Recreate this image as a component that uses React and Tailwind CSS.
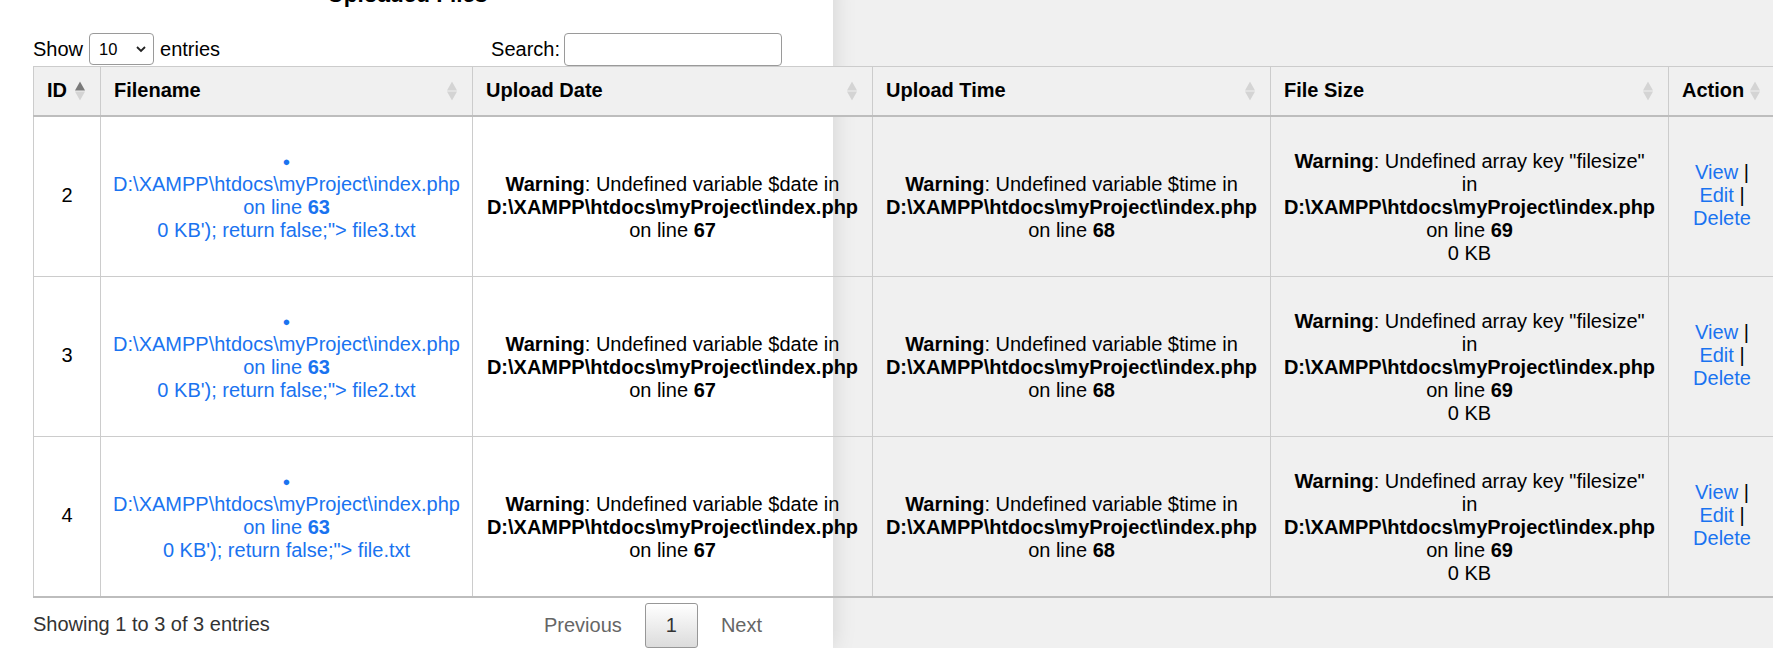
import React from "react";

function SortIcon({ active }) {
  return (
    <span className="absolute right-[15px] top-1/2 -translate-y-1/2 flex">
      <svg width="10" height="21" viewBox="0 0 10 21">
        <polygon points="0,10 5,1 10,10" fill={active ? "#7a7a7a" : "#d4d4d4"} />
        <polygon points="0,11 5,20 10,11" fill="#d4d4d4" />
      </svg>
    </span>
  );
}

const PATH = "D:\\XAMPP\\htdocs\\myProject\\index.php";

function Th({ children, active }) {
  return (
    <th className="relative h-[49px] bg-[#f0f0f0] border border-[#cccccc] border-b-2 border-b-[#bdbdbd] pl-[13px] pr-[30px] text-left font-bold align-middle">
      {children}
      <SortIcon active={active} />
    </th>
  );
}

const TD = "border border-[#cccccc] px-[12px] pt-[10px] pb-[11px] text-center align-middle whitespace-nowrap";

function Row({ id, file }) {
  return (
    <tr>
      <td className={TD}>{id}</td>
      <td className={TD + " text-[#1a73f0]"}>
        <div className="text-[13px] leading-[23px]">●</div>
        <div>{PATH}</div>
        <div>
          on line <b>63</b>
        </div>
        <div>0 KB'); return false;"&gt; {file}</div>
      </td>
      <td className={TD}>
        <div>&nbsp;</div>
        <div>
          <b>Warning</b>: Undefined variable $date in
        </div>
        <div>
          <b>{PATH}</b>
        </div>
        <div>
          on line <b>67</b>
        </div>
      </td>
      <td className={TD}>
        <div>&nbsp;</div>
        <div>
          <b>Warning</b>: Undefined variable $time in
        </div>
        <div>
          <b>{PATH}</b>
        </div>
        <div>
          on line <b>68</b>
        </div>
      </td>
      <td className={TD}>
        <div>&nbsp;</div>
        <div>
          <b>Warning</b>: Undefined array key "filesize"
        </div>
        <div>in</div>
        <div>
          <b>{PATH}</b>
        </div>
        <div>
          on line <b>69</b>
        </div>
        <div>0 KB</div>
      </td>
      <td className={TD}>
        <div>
          <span className="text-[#1a73f0]">View</span> |
        </div>
        <div>
          <span className="text-[#1a73f0]">Edit</span> |
        </div>
        <div>
          <span className="text-[#1a73f0]">Delete</span>
        </div>
      </td>
    </tr>
  );
}

export default function App() {
  return (
    <div className="w-full min-h-[648px] h-[648px] overflow-hidden bg-[#f0f0f0] font-['Liberation_Sans',Arial,sans-serif] text-[20px] leading-[23px] text-black">
      <div className="w-[833px] min-h-[648px] bg-white pl-[33px] pr-[51px] shadow-[0_0_22px_rgba(0,0,0,0.13)]">
        <h2 className="-mt-[18px] mb-[24px] text-center text-[22.5px] leading-[26px] font-bold">Uploaded Files</h2>
        <div className="flex items-center justify-between h-[34px]">
          <div className="flex items-center">
            <span>Show</span>
            <div className="mx-[6px] flex items-center justify-between w-[65px] h-[32px] border border-[#9a9a9a] rounded-[4px] pl-[9px] pr-[7px] text-[16.5px]">
              <span>10</span>
              <svg width="10" height="7" viewBox="0 0 10 7">
                <polyline points="1,1 5,5 9,1" fill="none" stroke="#222" strokeWidth="1.8" />
              </svg>
            </div>
            <span>entries</span>
          </div>
          <div className="flex items-center">
            <span>Search:</span>
            <div className="ml-[4px] w-[218px] h-[33px] border border-[#9a9a9a] rounded-[4px]" />
          </div>
        </div>
        <table className="table-fixed border-collapse w-[1742px]">
          <colgroup>
            <col className="w-[67px]" />
            <col className="w-[372px]" />
            <col className="w-[400px]" />
            <col className="w-[398px]" />
            <col className="w-[398px]" />
            <col className="w-[107px]" />
          </colgroup>
          <thead>
            <tr>
              <Th active>ID</Th>
              <Th>Filename</Th>
              <Th>Upload Date</Th>
              <Th>Upload Time</Th>
              <Th>File Size</Th>
              <Th>Action</Th>
            </tr>
          </thead>
          <tbody className="border-b-2 border-b-[#bdbdbd]">
            <Row id="2" file="file3.txt" />
            <Row id="3" file="file2.txt" />
            <Row id="4" file="file.txt" />
          </tbody>
        </table>
        <div className="flex justify-between w-[749px]">
          <div className="pt-[15px] text-[#333]">Showing 1 to 3 of 3 entries</div>
          <div className="flex items-center pt-[5px]">
            <span className="px-[20px] py-[10px] text-[#666]">Previous</span>
            <span className="ml-[3px] px-[20px] py-[10px] border border-[#979797] rounded-[3px] bg-gradient-to-b from-white to-[#dcdcdc] text-[#333]">1</span>
            <span className="ml-[3px] px-[20px] py-[10px] text-[#666]">Next</span>
          </div>
        </div>
      </div>
    </div>
  );
}
